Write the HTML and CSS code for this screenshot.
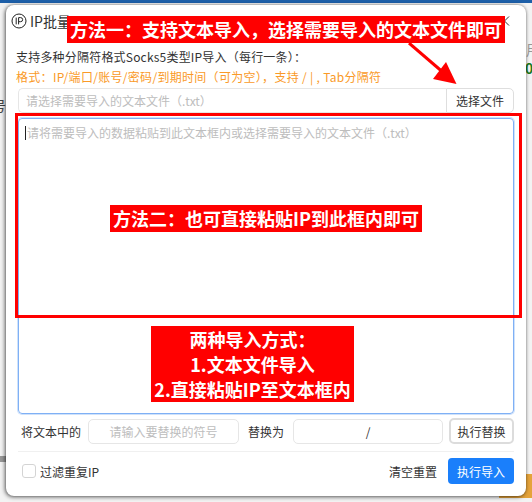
FILE: index.html
```html
<!DOCTYPE html>
<html lang="zh-CN">
<head>
<meta charset="utf-8">
<title>IP批量导入</title>
<link rel="stylesheet" href="styles.css">
</head>
<body>
<div class="topbar"></div>
<span class="bg-text bg-hao">号</span>
<span class="bg-text bg-shen">用</span>
<span class="bg-text bg-green">0I</span>
<div class="bg-orange"></div>
<div class="bg-strip"></div>
<main class="modal">
  <header class="title">
    <svg class="ip-icon" width="16" height="16" viewBox="0 0 16 16" aria-hidden="true">
      <circle cx="8" cy="8" r="7" fill="none" stroke="#222" stroke-width="1"/>
      <path d="M5.2 4.6v6.8M7.6 11.4V4.6h2a2 2 0 0 1 0 4.1h-2" fill="none" stroke="#222" stroke-width="1"/>
    </svg>
    <span class="title-text">IP批量导入</span>
    <svg class="close" width="10" height="10" viewBox="0 0 10 10" aria-hidden="true">
      <path d="M9 .5 4.5 5 9 9.5" fill="none" stroke="#333" stroke-width="1"/>
    </svg>
  </header>
  <p class="desc">支持多种分隔符格式Socks5类型IP导入（每行一条）：</p>
  <p class="format">格式：IP/端口/账号/密码/到期时间（可为空），支持 / | , Tab分隔符</p>
  <div class="file-row">
    <div class="file-input">请选择需要导入的文本文件（.txt）</div>
    <button class="file-btn">选择文件</button>
  </div>
  <div class="textarea"><span class="caret"></span>请将需要导入的数据粘贴到此文本框内或选择需要导入的文本文件（.txt）</div>
  <div class="replace-row">
    <span class="label first">将文本中的</span>
    <div class="field placeholder">请输入要替换的符号</div>
    <span class="label">替换为</span>
    <div class="field">/</div>
    <button class="replace-btn">执行替换</button>
  </div>
  <footer class="footer">
    <label class="check"><span class="box"></span>过滤重复IP</label>
    <div class="actions">
      <button class="reset">清空重置</button>
      <button class="primary">执行导入</button>
    </div>
  </footer>
</main>

<div class="note note-one">方法一：支持文本导入，选择需要导入的文本文件即可</div>
<svg class="arrow" width="64" height="56" viewBox="0 0 64 56" aria-hidden="true">
  <path d="M2 1 38 32" stroke="#f00" stroke-width="3" fill="none"/>
  <path d="M49.5 42 26 37 39 20Z" fill="#f00"/>
</svg>
<div class="frame"></div>
<div class="note note-two">方法二：也可直接粘贴IP到此框内即可</div>
<div class="note note-three">两种导入方式：<br>1.文本文件导入<br>2.直接粘贴IP至文本框内</div>
</body>
</html>
```
FILE: styles.css
```css
* { box-sizing: border-box; }
html, body { margin: 0; padding: 0; }
body {
  width: 532px;
  height: 502px;
  position: relative;
  overflow: hidden;
  background: #f3f3f3;
  font-family: "Noto Sans CJK SC", "Noto Sans", sans-serif;
  color: #333;
  padding: 5px 6px 6px;
}
.topbar { position: absolute; left: 0; top: 0; width: 532px; height: 3px; background: #1d5fa8; }
.bg-text { position: absolute; font-size: 14px; line-height: 16px; color: #444; }
.bg-hao { left: -8px; top: 97px; }
.bg-shen { left: 526px; top: 41px; color: #999; }
.bg-green { left: 525px; top: 60px; color: #1e7a1e; font-weight: 700; }
.bg-orange { position: absolute; left: 499px; top: 474px; width: 33px; height: 24px; background: #e5a33a; }
.bg-strip { position: absolute; left: 0; top: 456px; width: 8px; height: 6px; background: #999; }
.modal {
  position: relative;
  width: 520px;
  height: 491px;
  padding: 0 12px;
  background: #fff;
  border-radius: 8px;
  box-shadow: -1px 1px 4px rgba(0, 0, 0, .55), 0 0 3px rgba(0, 0, 0, .3);
  display: flex;
  flex-direction: column;
}
.title { height: 32px; display: flex; align-items: center; font-size: 14px; color: #333; }
.ip-icon { margin-left: -7px; margin-right: 3px; flex: none; }
.title-text { flex: 1; }
.close { margin-right: 4px; flex: none; }
p { margin: 0 0 0 -2px; font-size: 12px; line-height: 20px; white-space: nowrap; }
.desc { margin-top: 10px; color: #333; letter-spacing: .2px; }
.format { color: #fa9a28; letter-spacing: .3px; }
.file-row { display: flex; height: 25px; margin-top: 1px; }
.file-input {
  flex: 1;
  border: 1px solid #e6e6e6;
  border-right: 0;
  border-radius: 5px 0 0 5px;
  font-size: 12px;
  line-height: 23px;
  padding-left: 7px;
  color: #bdbdbd;
}
button { font-family: inherit; font-size: 12px; color: #333; background: #fff; cursor: pointer; }
.file-btn {
  width: 68px;
  border: 1px solid #dedede;
  border-radius: 0 5px 5px 0;
  padding: 0;
}
.textarea {
  height: 296px;
  margin-top: 5px;
  border: 1px solid #7fb0f5;
  box-shadow: 0 0 0 1px #cfe2fb;
  border-radius: 4px;
  padding: 4px 6px;
  font-size: 12px;
  line-height: 20px;
  color: #bdbdbd;
}
.caret { display: inline-block; width: 1px; height: 14px; margin-right: 1px; background: #222; vertical-align: -2px; }
.replace-row { display: flex; align-items: center; height: 26px; margin-top: 4px; font-size: 12px; }
.label { color: #333; white-space: nowrap; margin: 0 9px; }
.label.first { margin: 0 7px 0 3px; }
.field {
  width: 150px;
  height: 25px;
  border: 1px solid #e6e6e6;
  border-radius: 5px;
  text-align: center;
  line-height: 23px;
  color: #333;
}
.placeholder { width: 151px; color: #bdbdbd; }
.replace-btn {
  width: 65px;
  height: 26px;
  margin-left: 6px;
  border: 2px solid #dcdcdc;
  border-radius: 5px;
  padding: 0;
}
.footer {
  display: flex;
  align-items: center;
  justify-content: space-between;
  height: 39px;
  margin-top: 7px;
  border-top: 1px solid #f0f0f0;
}
.check { display: flex; align-items: center; font-size: 12px; color: #333; padding-left: 4px; }
.box { width: 14px; height: 14px; border: 1px solid #d4d4d4; border-radius: 3px; margin-right: 4px; }
.actions { display: flex; align-items: center; }
.reset { border: 0; padding: 0; width: 66px; height: 26px; }
.primary {
  width: 66px;
  height: 26px;
  margin-left: 2px;
  border: 0;
  border-radius: 4px;
  background: #1a7ffb;
  color: #fff;
  padding: 0;
}
.note {
  position: absolute;
  background: #f00;
  color: #fff;
  font-weight: 700;
  font-size: 18px;
  text-align: center;
  white-space: nowrap;
}
.note-one { left: 67px; top: 16px; width: 438px; height: 27px; line-height: 27px; }
.note-two { left: 110px; top: 205px; width: 312px; height: 27px; line-height: 27px; }
.note-three { left: 151px; top: 326px; width: 203px; height: 76px; line-height: 25px; padding-top: 1px; }
.frame { position: absolute; left: 15px; top: 113px; width: 507px; height: 205px; border: 3px solid #f00; }
.arrow { position: absolute; left: 407px; top: 42px; }
```
